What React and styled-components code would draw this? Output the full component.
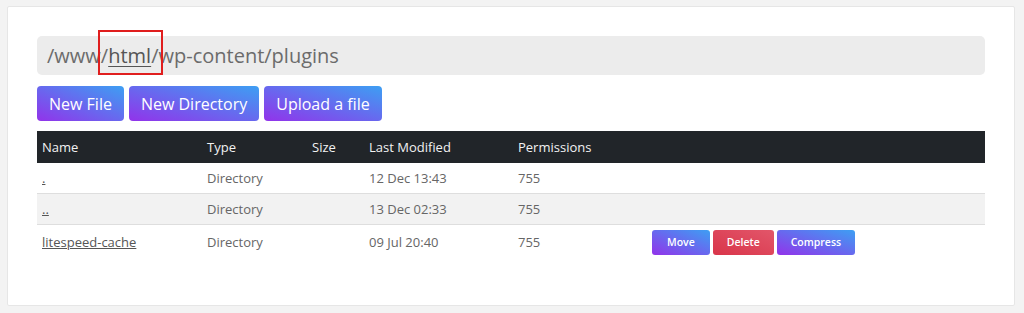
import React from "react";
import styled, { createGlobalStyle } from "styled-components";

const GlobalStyle = createGlobalStyle`
  body {
    margin: 0;
    background: #f3f3f3;
    font-family: "Open Sans", "Noto Sans", sans-serif;
  }
`;

const Page = styled.div`
  padding: 6px 9px 0 7px;
`;

const Card = styled.div`
  box-sizing: border-box;
  width: 1008px;
  height: 300px;
  background: #fff;
  border: 1px solid #e6e6e6;
  border-radius: 2px;
  padding: 29px 29px 0 29px;
`;

const PathBar = styled.div`
  height: 39px;
  background: #ececec;
  border-radius: 5px;
  display: flex;
  align-items: center;
  padding-left: 10px;
  font-size: 20px;
  color: #6b6b6b;
`;

const Crumb = styled.a`
  position: relative;
  color: #555;
  text-decoration: underline;
  text-decoration-thickness: 1px;
  text-underline-offset: 3px;
`;

const Marker = styled.span`
  position: absolute;
  left: -10px;
  right: -12px;
  top: -12px;
  bottom: -6px;
  border: 2px solid #e01e1e;
`;

const Toolbar = styled.div`
  display: flex;
  gap: 5px;
  margin: 11px 0 10px;
`;

const gradient = "linear-gradient(to top right, #9233ea, #3d9ff3)";

const Button = styled.button`
  height: 35px;
  padding: 0 12px;
  border: none;
  border-radius: 4px;
  background: ${gradient};
  color: #fff;
  font-family: inherit;
  font-size: 16px;
`;

const Table = styled.table`
  width: 948px;
  border-collapse: collapse;
  table-layout: fixed;
  font-size: 13px;
`;

const Th = styled.th`
  width: ${(p) => p.w - 10}px;
  height: 32px;
  padding: 0 5px;
  background: #212529;
  color: #f2f2f2;
  font-weight: 400;
  text-align: left;
`;

const Row = styled.tr`
  background: ${(p) => (p.striped ? "#f2f2f2" : "#fff")};
  border-bottom: ${(p) => (p.last ? "none" : "1px solid #dedede")};
`;

const Td = styled.td`
  height: ${(p) => (p.tall ? 34 : 30)}px;
  padding: 0 5px;
  color: #666;
`;

const FileLink = styled.a`
  color: #555;
  text-decoration: underline;
`;

const Actions = styled.div`
  display: flex;
  gap: 3px;
`;

const ActionButton = styled.button`
  height: 25px;
  padding: 0 ${(p) => p.px}px;
  border: none;
  border-radius: 3px;
  background: ${(p) =>
    p.danger ? "linear-gradient(to top right, #d9354a, #e2566a)" : gradient};
  color: #fff;
  font-family: inherit;
  font-size: 10.5px;
  font-weight: 600;
`;

const columns = [
  ["Name", 165],
  ["Type", 105],
  ["Size", 57],
  ["Last Modified", 149],
  ["Permissions", 134],
  ["", 338],
];

const files = [
  { name: ".", type: "Directory", modified: "12 Dec 13:43", perms: "755" },
  { name: "..", type: "Directory", modified: "13 Dec 02:33", perms: "755" },
  {
    name: "litespeed-cache",
    type: "Directory",
    modified: "09 Jul 20:40",
    perms: "755",
    actions: true,
  },
];

export default function App() {
  return (
    <>
      <GlobalStyle />
      <Page>
        <Card>
          <PathBar>
            /www/
            <Crumb>
              html
              <Marker />
            </Crumb>
            /wp-content/plugins
          </PathBar>
          <Toolbar>
            <Button>New File</Button>
            <Button>New Directory</Button>
            <Button>Upload a file</Button>
          </Toolbar>
          <Table>
            <thead>
              <tr>
                {columns.map(([label, w], i) => (
                  <Th key={i} w={w}>
                    {label}
                  </Th>
                ))}
              </tr>
            </thead>
            <tbody>
              {files.map((f, i) => (
                <Row key={f.name} striped={i === 1} last={i === files.length - 1}>
                  <Td tall={f.actions}>
                    <FileLink>{f.name}</FileLink>
                  </Td>
                  <Td>{f.type}</Td>
                  <Td />
                  <Td>{f.modified}</Td>
                  <Td>{f.perms}</Td>
                  <Td>
                    {f.actions && (
                      <Actions>
                        <ActionButton px={15}>Move</ActionButton>
                        <ActionButton px={14} danger>
                          Delete
                        </ActionButton>
                        <ActionButton px={14}>Compress</ActionButton>
                      </Actions>
                    )}
                  </Td>
                </Row>
              ))}
            </tbody>
          </Table>
        </Card>
      </Page>
    </>
  );
}
